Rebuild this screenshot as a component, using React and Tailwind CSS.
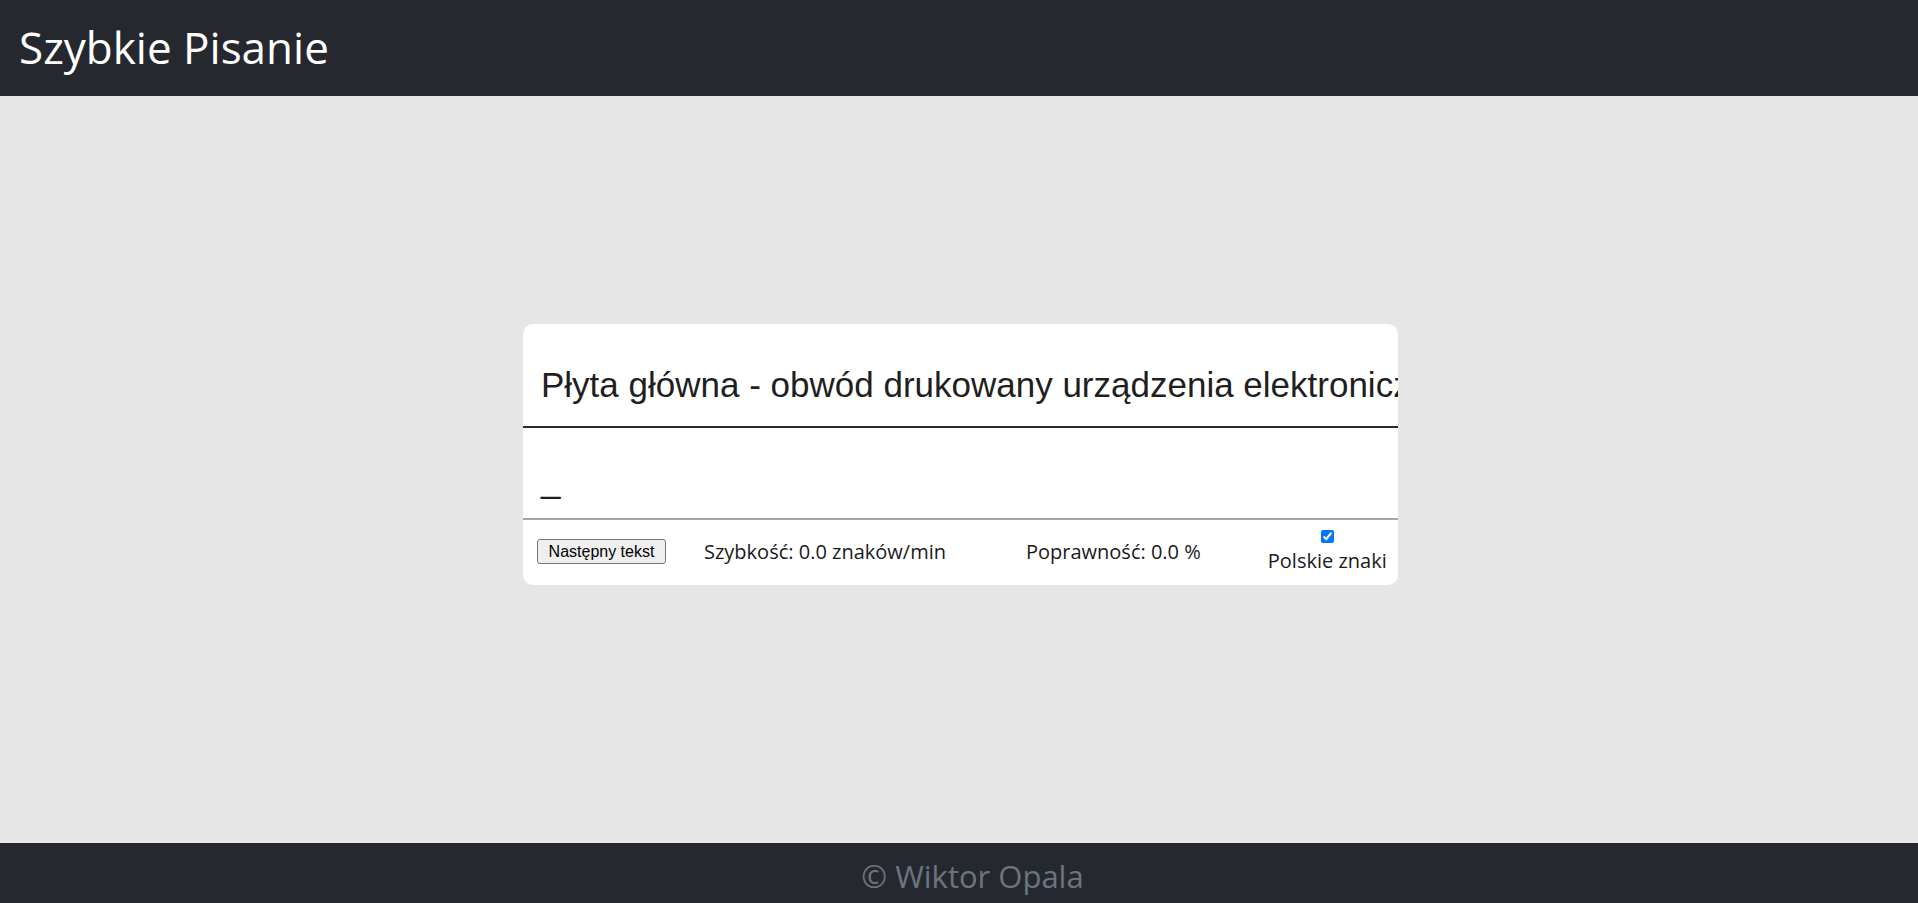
import React, { useState } from 'react';

const sans = "font-['Open_Sans',sans-serif]";
const arial = "font-['Liberation_Sans',Arial,sans-serif]";

const App = () => {
    const [polish, setPolish] = useState(true);
    const text = 'Płyta główna - obwód drukowany urządzenia elektronicznego, na którym montuje się najważniejsze podzespoły komputera.';

    return (
        <div className={`flex h-[903px] flex-col bg-[#e6e6e6] ${sans}`}>
            {/* Header */}
            <header className="flex h-[96px] shrink-0 items-center bg-[#25292f] pb-[2px] pl-[19px]">
                <h1 className="text-[44px] leading-[58px] font-normal text-white">Szybkie Pisanie</h1>
            </header>

            {/* Main */}
            <main className="flex flex-1 justify-center pt-[228px] pl-[3px]">
                <div className="h-[261px] w-[875px] overflow-hidden rounded-[10px] bg-white">
                    {/* Text to type */}
                    <div className="h-[104px] border-b-2 border-[#2b2b2b] pt-[41px] pl-[18px]">
                        <p className={`whitespace-nowrap text-[35px] leading-[40px] text-[#1f1f1f] ${arial}`}>{text}</p>
                    </div>

                    {/* Typed text */}
                    <div className="h-[92px] border-b-2 border-[#a6a6a6] pt-[32px] pl-[18px]">
                        <p className={`text-[35px] leading-[40px] text-[#1f1f1f] ${arial}`}>_</p>
                    </div>

                    {/* Controls */}
                    <div className="flex h-[65px] items-center pb-[2px] pl-[14px] text-[20px] text-[#1a1a1a]">
                        <button className={`h-[25px] w-[129px] rounded-[3px] border border-[#767676] bg-[#efefef] text-[16px] leading-[20px] text-black ${arial}`}>
                            Następny tekst
                        </button>
                        <span className="ml-[38px] leading-[28px]">Szybkość: 0.0 znaków/min</span>
                        <span className="ml-[80px] leading-[28px]">Poprawność: 0.0 %</span>
                        <label className="ml-[67px] flex flex-col items-center">
                            <input
                                type="checkbox"
                                checked={polish}
                                onChange={(e) => setPolish(e.target.checked)}
                                className="mt-[1px] h-[13px] w-[13px] accent-[#0075ff]"
                            />
                            <span className="mt-[4px] leading-[28px]">Polskie znaki</span>
                        </label>
                    </div>
                </div>
            </main>

            {/* Footer */}
            <footer className="flex h-[60px] shrink-0 justify-center bg-[#25292f] pt-[12px] pl-[27px]">
                <span className="text-[31px] leading-[42px] text-[#6c757d]">© Wiktor Opala</span>
            </footer>
        </div>
    );
};

export default App;
